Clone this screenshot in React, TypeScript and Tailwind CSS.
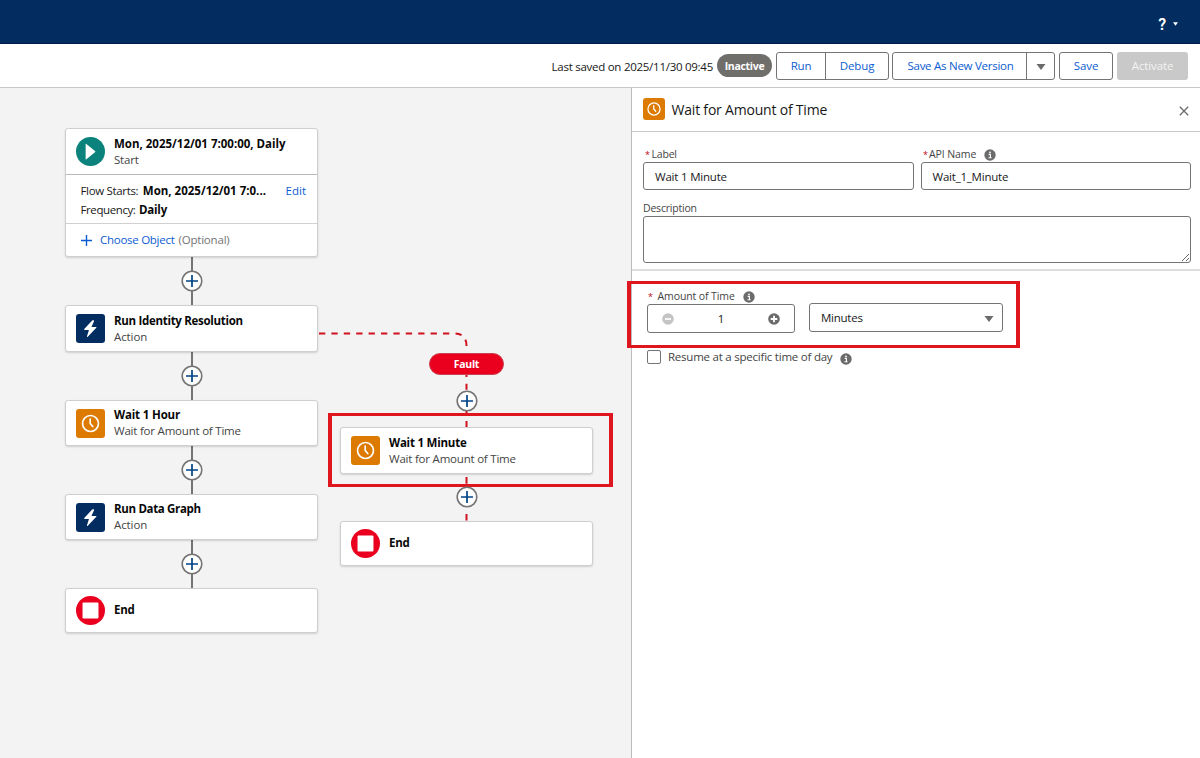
import type { ReactNode } from 'react';

function ClockIcon({ className }: { className: string }) {
  return (
    <svg viewBox="0 0 28 28" className={className} fill="none" stroke="#fff" strokeLinecap="round" strokeLinejoin="round">
      <circle cx="14" cy="14" r="7.700" strokeWidth="1.600" />
      <path d="M13.700 9.800V14l2.500 2.900" strokeWidth="1.600" />
    </svg>
  );
}

function NodeIcon({ kind }: { kind: string }) {
  if (kind === 'action')
    return (
      <svg viewBox="0 0 28 28" className="size-[29px] shrink-0 rounded-[3px] bg-[#032d60]">
        <path d="M15.4 6.600 8 14.600c-.3.4-.1.8.3.8h4.200l-1.900 6.200c-.1.5.4.7.8.3l8.200-8.600c.3-.4.1-.8-.3-.8h-4.400l2.500-5.600c.2-.5-.1-.9-.6-.9h-.7c-.3 0-.5.3-.7.6z" fill="#fff" />
      </svg>
    );
  if (kind === 'wait') return <ClockIcon className="size-[29px] shrink-0 rounded-[3px] bg-[#dd7a01]" />;
  if (kind === 'start')
    return (
      <svg viewBox="0 0 28 28" className="size-[29px] shrink-0 rounded-full bg-[#0b827c]">
        <path d="M9.300 7v14.200a.4.4 0 0 0 .7.300l8.600-7.100a.5.5 0 0 0 0-.7L10 6.700a.4.4 0 0 0-.7.3z" fill="#fff" />
      </svg>
    );
  return (
    <svg viewBox="0 0 28 28" className="size-[29px] shrink-0 rounded-full bg-[#ea001e]">
      <rect x="6.300" y="6.300" width="15.400" height="15.400" rx="1" fill="#fff" />
    </svg>
  );
}

function InfoIcon({ className }: { className: string }) {
  return (
    <svg viewBox="0 0 12 12" className={className}>
      <circle cx="6" cy="6" r="5.700" fill="#6b6b6b" />
      <path d="M4.700 5.300h1.700v3.100M4.500 8.700h3.100" stroke="#fff" strokeWidth="1.150" fill="none" />
      <circle cx="6" cy="3.300" r=".9" fill="#fff" />
    </svg>
  );
}

function AddButton({ className }: { className: string }) {
  return (
    <svg viewBox="0 0 22 22" className={`absolute size-[22px] ${className}`}>
      <circle cx="11" cy="11" r="9.800" fill="#fff" stroke="#747474" strokeWidth="1.600" />
      <path d="M11 5v12M5 11h12" stroke="#014486" strokeWidth="1.700" />
    </svg>
  );
}

function Node({ kind, className, children }: { kind: string; className: string; children: ReactNode }) {
  return (
    <div className={`absolute flex items-center gap-[9px] rounded-[3px] border border-[#cfcfcf] bg-white pl-[10px] shadow-[0_1px_2px_rgba(0,0,0,0.15)] ${className}`}>
      <NodeIcon kind={kind} />
      <div className="flex flex-col leading-4">{children}</div>
    </div>
  );
}

const title = 'self-start whitespace-nowrap font-bold text-[#080808]';
const sub = 'self-start whitespace-nowrap text-[#444]';

export default function App() {
  return (
    <div className="flex h-[758px] w-[1200px] flex-col overflow-hidden bg-white font-['Open_Sans','Noto_Sans',sans-serif] text-[11.5px] text-[#181818]">
      <header className="flex h-11 shrink-0 items-center justify-end gap-[7px] border-b border-[#001a4d] bg-[#032d60] pr-[22px] pt-[7px] text-white">
        <span className="font-['Roboto',sans-serif] text-[16px] font-semibold leading-5">?</span>
        <svg viewBox="0 0 6 4" className="mb-[3px] h-[4px] w-[5px]"><path d="M0 0h6L3 4z" fill="#fff" /></svg>
      </header>

      <div className="flex h-11 shrink-0 items-center justify-end border-b border-[#c9c9c9] pr-3">
        <span className="mr-1 pt-[2px] tracking-[-0.265px]">Last saved on 2025/11/30 09:45</span>
        <span className="mr-1 flex h-[23px] w-[55px] items-center justify-center rounded-full bg-[#706e6b] pt-[3px] text-[10.5px] font-bold tracking-[-0.3px] text-white">Inactive</span>
        <div className="mr-[3px] flex h-7 w-[113px] rounded-[3px] border border-[#747474] text-[#0b5cd0]">
          <button className="w-[49px] border-r border-[#747474] tracking-[-0.2px]">Run</button>
          <button className="flex-1 tracking-[-0.1px]">Debug</button>
        </div>
        <div className="mr-1 flex h-7 w-[163px] rounded-[3px] border border-[#747474] text-[#0b5cd0]">
          <button className="flex-1 border-r border-[#747474] pl-[2px] tracking-[-0.26px]">Save As New Version</button>
          <button className="flex w-[27px] items-center justify-center pt-[2px]"><svg viewBox="0 0 10 6" className="h-[6px] w-[10px]"><path d="M.5 0h9L5 6z" fill="#6b6b6b" /></svg></button>
        </div>
        <button className="mr-1 h-7 w-[54px] rounded-[3px] border border-[#747474] tracking-[-0.1px] text-[#0b5cd0]">Save</button>
        <button className="h-7 w-[71px] rounded-[3px] bg-[#c9c9c9] tracking-[-0.12px] text-[#f3f3f3]">Activate</button>
      </div>

      <main className="flex min-h-0 flex-1">
        <section className="relative w-[631px] shrink-0 bg-[#f3f3f3]">
          <svg viewBox="0 0 631 670" className="absolute inset-0 h-[670px] w-[631px]" fill="none" strokeWidth="2">
            <path d="M192 168v334" stroke="#747474" />
            <path d="M319 245.500H454Q466.500 245.500 466.500 258V260" stroke="#d0111f" strokeDasharray="6.300 6.100" />
            <path d="M466.500 286v3M466.500 295.700v6M466.500 320v5M466.500 333v6M466.500 389v6.700M466.500 426v6.500" stroke="#d0111f" />
          </svg>

          <div className="absolute left-[65px] top-10 flex h-[129px] w-[253px] flex-col rounded-[3px] border border-[#cfcfcf] bg-white shadow-[0_1px_2px_rgba(0,0,0,0.15)]">
            <div className="flex h-[46px] items-center gap-[9px] border-b border-[#b8b8b8] pl-[10px]">
              <NodeIcon kind="start" />
              <div className="flex flex-col leading-4"><span className={title}>Mon, 2025/12/01 7:00:00, Daily</span><span className={`${sub} tracking-[-0.2px]`}>Start</span></div>
            </div>
            <div className="flex h-[49px] flex-col justify-center border-b border-[#d0d0d0] pl-[14.5px] pt-[2px] leading-[19px]">
              <div className="flex"><span className="mr-[4.5px] tracking-[-0.33px]">Flow Starts:</span><b className="text-[#080808]">Mon, 2025/12/01 7:0...</b><span className="ml-auto mr-[11px] text-[#0b5cd0]">Edit</span></div>
              <div className="flex"><span className="mr-[3.5px] tracking-[-0.4px]">Frequency:</span><b className="tracking-[-0.2px] text-[#080808]">Daily</b></div>
            </div>
            <div className="flex flex-1 items-center pl-[15px]">
              <svg viewBox="0 0 11 11" className="mr-2 size-[11px]"><path d="M5.500 0v11M0 5.500h11" stroke="#0b5cd0" strokeWidth="1.400" /></svg>
              <span className="mr-1 tracking-[-0.27px] text-[#0b5cd0]">Choose Object</span><span className="tracking-[-0.2px] text-[#747474]">(Optional)</span>
            </div>
          </div>
          <Node kind="action" className="left-[65px] top-[217px] h-[47px] w-[253px]"><span className={`${title} tracking-[-0.3px]`}>Run Identity Resolution</span><span className={`${sub} tracking-[-0.1px]`}>Action</span></Node>
          <Node kind="wait" className="left-[65px] top-[312px] h-[46px] w-[253px]"><span className={`${title} tracking-[-0.16px]`}>Wait 1 Hour</span><span className={`${sub} tracking-[-0.21px]`}>Wait for Amount of Time</span></Node>
          <Node kind="action" className="left-[65px] top-[406px] h-[46px] w-[253px]"><span className={`${title} tracking-[-0.33px]`}>Run Data Graph</span><span className={`${sub} tracking-[-0.1px]`}>Action</span></Node>
          <Node kind="end" className="left-[65px] top-[500px] h-[45px] w-[253px]"><span className={`${title} pb-[2px] tracking-[-0.3px]`}>End</span></Node>
          <Node kind="wait" className="left-[340px] top-[339px] h-[47px] w-[253px]"><span className={`${title} tracking-[-0.22px]`}>Wait 1 Minute</span><span className={`${sub} tracking-[-0.21px]`}>Wait for Amount of Time</span></Node>
          <Node kind="end" className="left-[340px] top-[433px] h-[45px] w-[253px]"><span className={`${title} pb-px tracking-[-0.3px]`}>End</span></Node>
          <AddButton className="left-[181px] top-[182px]" />
          <AddButton className="left-[181px] top-[276.5px]" />
          <AddButton className="left-[181px] top-[370.5px]" />
          <AddButton className="left-[181px] top-[465px]" />
          <div className="absolute left-[429px] top-[265px] flex h-[22px] w-[75px] items-center justify-center rounded-full border border-[#c9404f] bg-[#ea001e] pt-px text-[10.5px] font-bold tracking-[-0.3px] text-white">Fault</div>
          <div className="absolute left-[328px] top-[325px] h-[74px] w-[285px] border-x-4 border-y-[3px] border-[#e0161f]" />
          <AddButton className="left-[455.5px] top-[302px]" />
          <AddButton className="left-[455.5px] top-[398px]" />
        </section>

        <aside className="relative flex flex-1 flex-col border-l border-[#bdbdbd] bg-white">
          <div className="flex h-11 shrink-0 items-center border-b border-[#c9c9c9] pl-[11px] pr-[11px]">
            <ClockIcon className="mb-px mr-[6.5px] size-[22px] rounded-[3px] bg-[#dd7a01]" />
            <h2 className="text-[14px] tracking-[-0.2px]">Wait for Amount of Time</h2>
            <svg viewBox="0 0 10 10" className="ml-auto mt-[3px] size-[10px]"><path d="M.8.8l8.400 8.400M9.200.8.8 9.200" stroke="#6b6b6b" strokeWidth="1.300" /></svg>
          </div>
          <div className="flex h-[139px] shrink-0 flex-col border-b-2 border-[#dedede] pl-[11px] pr-[9px] pt-4 text-[#444]">
            <div className="flex gap-[7px]">
              <div className="w-[271px]">
                <div className="flex h-[14px] items-center text-[10.5px]"><span className="w-[8.5px] pl-[2px] text-[9px] text-[#ba0517]">*</span><span className="tracking-[-0.2px]">Label</span></div>
                <div className="flex h-[28px] items-center rounded-[3px] border border-[#747474] pl-[11px] pt-px tracking-[-0.2px] text-[#181818]">Wait 1 Minute</div>
              </div>
              <div className="flex-1">
                <div className="flex h-[14px] items-center text-[10.5px]"><span className="w-2 pl-[2px] text-[9px] text-[#ba0517]">*</span><span className="tracking-[-0.1px]">API Name</span><InfoIcon className="ml-2 size-3" /></div>
                <div className="flex h-[28px] items-center rounded-[3px] border border-[#747474] pl-[10.5px] pt-px tracking-[-0.22px] text-[#181818]">Wait_1_Minute</div>
              </div>
            </div>
            <div className="mt-[11px] flex h-[15px] items-center text-[10.5px] tracking-[-0.2px]">Description</div>
            <textarea className="block h-[47px] w-full shrink-0 resize rounded-[3px] border border-[#747474] bg-white" />
          </div>
          <div className="flex flex-col pl-[15px] pt-[18px] text-[#444]">
            <div className="flex h-[15px] items-center text-[10.5px]"><span className="w-[10.5px] pl-px text-[9px] text-[#ba0517]">*</span><span className="tracking-[-0.1px]">Amount of Time</span><InfoIcon className="ml-2 mt-px size-3" /></div>
            <div className="flex gap-[14px]">
              <div className="flex h-[29px] w-[148px] items-center justify-between rounded-[3px] border border-[#747474] px-[14px] text-[#181818]">
                <svg viewBox="0 0 12 12" className="size-3"><circle cx="6" cy="6" r="5.800" fill="#c4c4c4" /><path d="M3 6h6" stroke="#fff" strokeWidth="1.700" /></svg>
                <span>1</span>
                <svg viewBox="0 0 12 12" className="size-3"><circle cx="6" cy="6" r="5.800" fill="#6b6b6b" /><path d="M2.700 6h6.600M6 2.700v6.600" stroke="#fff" strokeWidth="1.800" /></svg>
              </div>
              <div className="-mt-px flex h-[29px] w-[194px] items-center justify-between rounded-[3px] border border-[#747474] pl-[11px] pr-[8px] text-[#181818]">
                <span className="tracking-[-0.25px]">Minutes</span>
                <svg viewBox="0 0 10 6" className="mt-[3px] h-[6px] w-[10px]"><path d="M.5 0h9L5 6z" fill="#6b6b6b" /></svg>
              </div>
            </div>
            <div className="mt-[16px] flex h-[15px] items-center"><span className="size-[14px] rounded-[2px] border border-[#747474]" /><span className="ml-[7px] tracking-[-0.23px]">Resume at a specific time of day</span><InfoIcon className="ml-2 mt-[5px] size-3" /></div>
          </div>
          <div className="absolute -left-[5px] top-[193px] h-[67px] w-[393px] border-x-4 border-y-[3px] border-[#e0161f]" />
        </aside>
      </main>
    </div>
  );
}
